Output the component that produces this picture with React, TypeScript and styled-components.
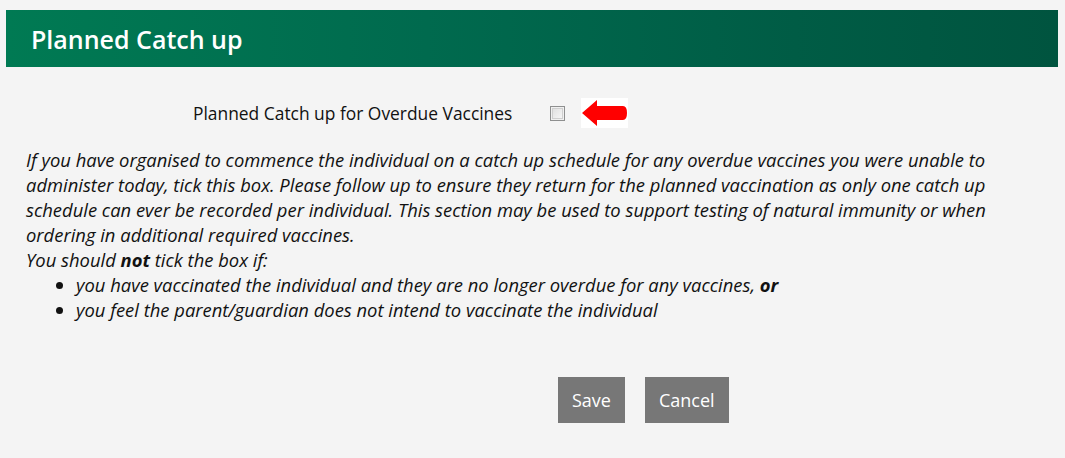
import React from "react";
import styled, { createGlobalStyle } from "styled-components";

const Global = createGlobalStyle`
  html, body { margin: 0; padding: 0; background: #f4f4f4; }
  body { font-family: "Open Sans", "DejaVu Sans", sans-serif; color: #111; }
`;

const Page = styled.div`
  width: 1065px;
  height: 458px;
  padding-top: 10px;
  box-sizing: border-box;
`;

const Header = styled.div`
  margin: 0 7px 0 6px;
  height: 57px;
  display: flex;
  align-items: center;
  padding-left: 25px;
  background: linear-gradient(to right, #007a53, #006a4e 40%, #005c45 75%, #00543f);
`;

const Title = styled.h1`
  margin: 0;
  font-size: 25px;
  font-weight: 600;
  color: #fff;
`;

const CheckRow = styled.div`
  display: flex;
  align-items: center;
  margin-top: 31px;
  padding-left: 193px;
  height: 30px;
`;

const Label = styled.label`
  font-size: 17.4px;
  margin-right: 38px;
`;

const Box = styled.input`
  appearance: none;
  -webkit-appearance: none;
  width: 15px;
  height: 15px;
  margin: 0 16px 0 0;
  box-sizing: border-box;
  border: 1px solid #8e8f8f;
  background: linear-gradient(135deg, #dcdcdc, #f4f4f4 80%);
  box-shadow: inset 0 0 0 1px #f0f0f0, inset 0 0 0 2px #cfcfcf;
`;

const Arrow = styled.svg`
  display: block;
`;

const Body = styled.div`
  margin: 19px 26px 0 26px;
  font-size: 18.4px;
  font-style: italic;
  line-height: 25px;
`;

const P = styled.p`
  margin: 0;
`;

const List = styled.ul`
  margin: 0;
  padding-left: 50px;
  list-style: disc;
`;

const Actions = styled.div`
  display: flex;
  gap: 20px;
  margin-top: 55px;
  padding-left: 558px;
`;

const Button = styled.button`
  height: 46px;
  padding: 0 14px;
  border: none;
  background: #777;
  color: #fff;
  font-family: "Open Sans", sans-serif;
  font-size: 18px;
  cursor: pointer;
`;

export default function App() {
  return (
    <Page>
      <Global />
      <Header>
        <Title>Planned Catch up</Title>
      </Header>
      <CheckRow>
        <Label htmlFor="pcu">Planned Catch up for Overdue Vaccines</Label>
        <Box id="pcu" type="checkbox" />
        <Arrow width="47" height="30" viewBox="0 0 47 30">
          <rect width="47" height="30" fill="#fff" />
          <path
            d="M1 15 L16 2 L16 8 L42 8 Q46 8 46 15 Q46 22 42 22 L16 22 L16 28 Z"
            fill="#f00"
          />
        </Arrow>
      </CheckRow>
      <Body>
        <P>
          If you have organised to commence the individual on a catch up schedule for any overdue
          vaccines you were unable to administer today, tick this box. Please follow up to ensure
          they return for the planned vaccination as only one catch up schedule can ever be recorded
          per individual. This section may be used to support testing of natural immunity or when
          ordering in additional required vaccines.
        </P>
        <P>
          You should <b>not</b> tick the box if:
        </P>
        <List>
          <li>
            you have vaccinated the individual and they are no longer overdue for any vaccines,{" "}
            <b>or</b>
          </li>
          <li>you feel the parent/guardian does not intend to vaccinate the individual</li>
        </List>
      </Body>
      <Actions>
        <Button>Save</Button>
        <Button>Cancel</Button>
      </Actions>
    </Page>
  );
}
